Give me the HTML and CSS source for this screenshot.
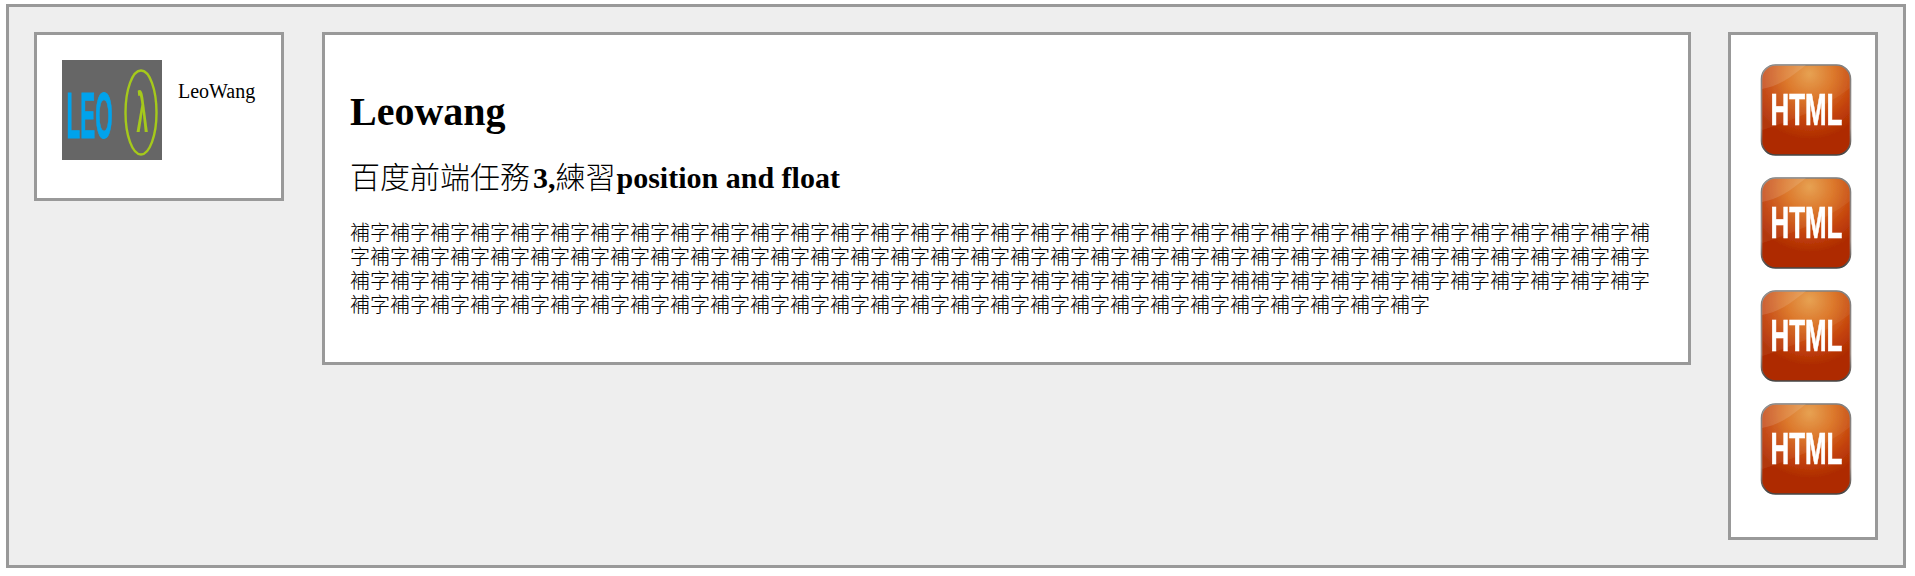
FILE: index.html
```html
<!DOCTYPE html>
<html lang="zh-Hant">
<head>
    <meta charset="UTF-8">
    <title>Leowang - position and float</title>
    <link rel="stylesheet" href="styles.css">
</head>
<body>
    <svg class="defs" width="0" height="0" aria-hidden="true">
        <defs>
            <radialGradient id="glow" cx="54%" cy="10%" r="72%">
                <stop offset="0" stop-color="#e69c48"/>
                <stop offset="0.38" stop-color="#da701f"/>
                <stop offset="0.72" stop-color="#c4430c"/>
                <stop offset="1" stop-color="#ae2c02"/>
            </radialGradient>
            <linearGradient id="rim" x1="0" y1="0" x2="0" y2="1">
                <stop offset="0" stop-color="#7a7a7a"/>
                <stop offset="0.7" stop-color="#a09088"/>
                <stop offset="1" stop-color="#444"/>
            </linearGradient>
            <filter id="soft" x="-5%" y="-5%" width="110%" height="110%">
                <feGaussianBlur stdDeviation="0.45"/>
            </filter>
            <symbol id="html-icon" viewBox="0 0 100 100">
                <g filter="url(#soft)">
                    <rect x="5.5" y="5" width="89" height="90" rx="14" fill="url(#glow)" stroke="url(#rim)" stroke-width="1.6"/>
                    <path d="M6 29C24 26 36 16 50 5H19C11 5 6 10 6 18Z" fill="#fff" opacity="0.12"/>
                    <path d="M6 70C30 62 66 50 94 28V18C94 10 89 5 81 5H19C11 5 6 10 6 18Z" fill="#fff" opacity="0.06"/>
                    <text class="icon-label" transform="translate(14.5 65) scale(.575 1)">HTML</text>
                </g>
            </symbol>
        </defs>
    </svg>

    <div class="wrapper">
        <div class="box profile">
            <svg class="logo" viewBox="0 0 100 100" width="100" height="100" role="img" aria-label="LEO">
                <rect width="100" height="100" fill="#666"/>
                <g filter="url(#soft)">
                    <text class="logo-name" transform="translate(4.5 78) scale(.345 1)">LEO</text>
                    <ellipse cx="79" cy="52.5" rx="15.5" ry="42" fill="none" stroke="#a5c91a" stroke-width="2.4"/>
                    <text class="logo-mark" transform="translate(74.5 72) scale(.38 1)">λ</text>
                </g>
            </svg>
            <p class="name">LeoWang</p>
        </div>

        <div class="box content">
            <h1>Leowang</h1>
            <h2><span class="cjk lead">百度前端任務</span>3,<span class="cjk tail">練習</span>position and float</h2>
            <p class="filler">補字補字補字補字補字<!--
-->補字補字補字補字補字<!--
-->補字補字補字補字補字<!--
-->補字補字補字補字補字<!--
-->補字補字補字補字補字<!--
-->補字補字補字補字補字<!--
-->補字補字補字補字補字<!--
-->補字補字補字補字補字<!--
-->補字補字補字補字補字<!--
-->補字補字補字補字補字<!--
-->補字補字補字補字補字<!--
-->補字補字補字補字補字<!--
-->補字補字補字補字補字<!--
-->補字補字補字補字補字<!--
-->補字補字補字補字補字<!--
-->補字補字補字補字補字<!--
-->補字補字補字補字補字<!--
-->補字補字補<!--
-->補字補字補字補字補字<!--
-->補字補字補字補字補字<!--
-->補字補字補字補字補字<!--
-->補字補字補字補字補字<!--
-->補字補字補字補字補字<!--
-->補字補字補字補字補字<!--
-->補字補字補字補字補字<!--
-->補字補字</p>
        </div>

        <div class="box icons">
            <svg class="icon" width="100" height="100" role="img" aria-label="HTML"><use href="#html-icon"/></svg>
            <svg class="icon" width="100" height="100" role="img" aria-label="HTML"><use href="#html-icon"/></svg>
            <svg class="icon" width="100" height="100" role="img" aria-label="HTML"><use href="#html-icon"/></svg>
            <svg class="icon" width="100" height="100" role="img" aria-label="HTML"><use href="#html-icon"/></svg>
        </div>
    </div>
</body>
</html>
```

FILE: styles.css
```css
* {
    box-sizing: border-box;
}

body {
    margin: 4px 0 0 6px;
    font-family: "Liberation Serif", "Noto Sans CJK TC", serif;
    font-size: 20px;
    color: #000;
    background: #fff;
}

.defs {
    position: absolute;
}

.wrapper {
    display: flex;
    align-items: flex-start;
    width: 1900px;
    height: 564px;
    padding: 25px;
    background: #eee;
    border: 3px solid #999;
}

.box {
    background: #fff;
    border: 3px solid #999;
    padding: 25px;
}

.profile {
    display: flex;
    flex: none;
    width: 250px;
    height: 169px;
}

.logo {
    flex: none;
    display: block;
}

.name {
    margin: 20px 0 0 16px;
    line-height: 23px;
}

.content {
    flex: 1;
    margin: 0 37px 0 38px;
    height: 333px;
}

h1 {
    margin: 29px 0 26px;
    font-size: 40px;
    line-height: 46px;
}

h2 {
    margin: 26px 0;
    font-size: 30px;
    line-height: 34px;
}

.cjk {
    font-weight: 300;
}

.lead {
    margin-right: 3px;
}

.tail {
    margin-right: 1px;
}

.filler {
    margin: 20px 0;
    font-weight: 300;
    line-height: 24px;
}

.icons {
    flex: none;
    width: 150px;
    height: 508px;
}

.icon {
    display: block;
    margin-bottom: 13px;
}

.icon-label {
    font-family: "Liberation Sans", sans-serif;
    font-weight: 700;
    font-size: 45px;
    fill: #fff;
    stroke: #fff;
    stroke-width: 0.7px;
}

.logo-name {
    font-family: "Liberation Sans", sans-serif;
    font-weight: 700;
    font-size: 65px;
    fill: #00a3ec;
    stroke: #00a3ec;
    stroke-width: 1px;
}

.logo-mark {
    font-family: "Liberation Sans", sans-serif;
    font-weight: 700;
    font-size: 55px;
    fill: #a5c91a;
}
```
